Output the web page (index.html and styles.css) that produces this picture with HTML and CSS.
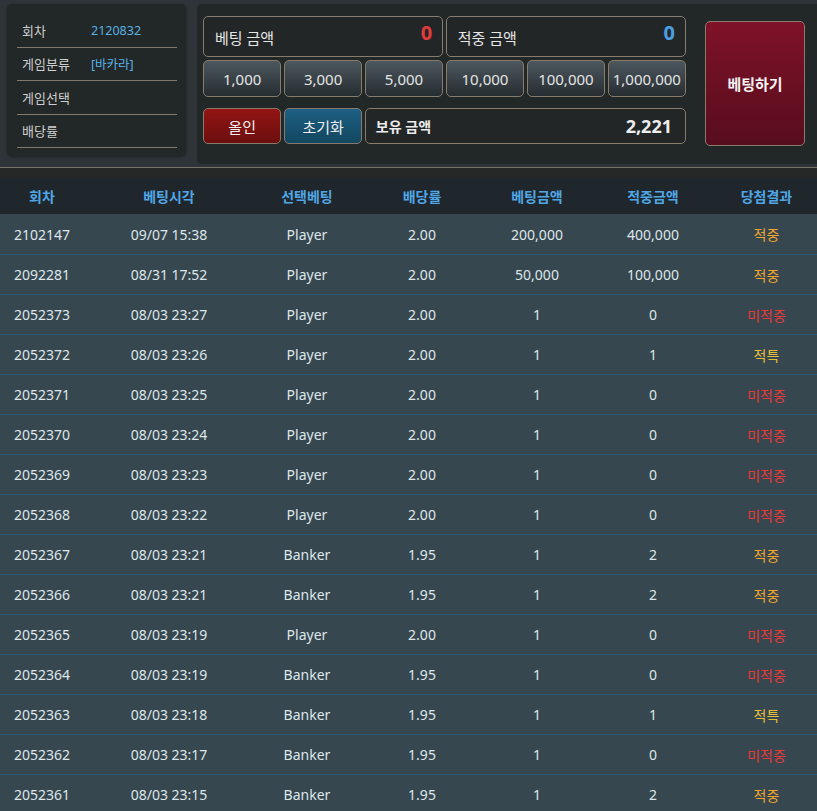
FILE: index.html
```html
<!DOCTYPE html>
<html lang="ko">
<head>
<meta charset="utf-8">
<title>베팅</title>
<link rel="stylesheet" href="styles.css">
</head>
<body>
<div class="top">
  <div class="info">
    <div class="info-row"><span class="info-label">회차</span><span class="info-value">2120832</span></div>
    <div class="info-row"><span class="info-label">게임분류</span><span class="info-value">[바카라]</span></div>
    <div class="info-row"><span class="info-label">게임선택</span><span class="info-value"></span></div>
    <div class="info-row"><span class="info-label">배당률</span><span class="info-value"></span></div>
  </div>
  <div class="bet">
    <div class="bet-main">
      <div class="amount">
        <span class="amount-label">베팅 금액</span>
        <span class="amount-value red">0</span>
      </div>
      <div class="amount">
        <span class="amount-label">적중 금액</span>
        <span class="amount-value blue">0</span>
      </div>
      <div class="chips">
        <button class="chip">1,000</button>
        <button class="chip">3,000</button>
        <button class="chip">5,000</button>
        <button class="chip">10,000</button>
        <button class="chip">100,000</button>
        <button class="chip">1,000,000</button>
      </div>
      <div class="actions">
        <button class="act allin">올인</button>
        <button class="act reset">초기화</button>
        <div class="balance">
          <span class="balance-label">보유 금액</span>
          <span class="balance-value">2,221</span>
        </div>
      </div>
    </div>
    <button class="bet-go">베팅하기</button>
  </div>
</div>
<div class="list">
  <table class="history">
    <colgroup>
      <col class="c1"><col class="c2"><col class="c3"><col class="c4"><col class="c5"><col class="c6"><col class="c7">
    </colgroup>
    <thead>
      <tr><th>회차</th><th>베팅시각</th><th>선택베팅</th><th>배당률</th><th>베팅금액</th><th>적중금액</th><th>당첨결과</th></tr>
    </thead>
    <tbody>
      <tr><td>2102147</td><td>09/07 15:38</td><td>Player</td><td>2.00</td><td>200,000</td><td>400,000</td><td class="win">적중</td></tr>
      <tr><td>2092281</td><td>08/31 17:52</td><td>Player</td><td>2.00</td><td>50,000</td><td>100,000</td><td class="win">적중</td></tr>
      <tr><td>2052373</td><td>08/03 23:27</td><td>Player</td><td>2.00</td><td>1</td><td>0</td><td class="lose">미적중</td></tr>
      <tr><td>2052372</td><td>08/03 23:26</td><td>Player</td><td>2.00</td><td>1</td><td>1</td><td class="tie">적특</td></tr>
      <tr><td>2052371</td><td>08/03 23:25</td><td>Player</td><td>2.00</td><td>1</td><td>0</td><td class="lose">미적중</td></tr>
      <tr><td>2052370</td><td>08/03 23:24</td><td>Player</td><td>2.00</td><td>1</td><td>0</td><td class="lose">미적중</td></tr>
      <tr><td>2052369</td><td>08/03 23:23</td><td>Player</td><td>2.00</td><td>1</td><td>0</td><td class="lose">미적중</td></tr>
      <tr><td>2052368</td><td>08/03 23:22</td><td>Player</td><td>2.00</td><td>1</td><td>0</td><td class="lose">미적중</td></tr>
      <tr><td>2052367</td><td>08/03 23:21</td><td>Banker</td><td>1.95</td><td>1</td><td>2</td><td class="win">적중</td></tr>
      <tr><td>2052366</td><td>08/03 23:21</td><td>Banker</td><td>1.95</td><td>1</td><td>2</td><td class="win">적중</td></tr>
      <tr><td>2052365</td><td>08/03 23:19</td><td>Player</td><td>2.00</td><td>1</td><td>0</td><td class="lose">미적중</td></tr>
      <tr><td>2052364</td><td>08/03 23:19</td><td>Banker</td><td>1.95</td><td>1</td><td>0</td><td class="lose">미적중</td></tr>
      <tr><td>2052363</td><td>08/03 23:18</td><td>Banker</td><td>1.95</td><td>1</td><td>1</td><td class="tie">적특</td></tr>
      <tr><td>2052362</td><td>08/03 23:17</td><td>Banker</td><td>1.95</td><td>1</td><td>0</td><td class="lose">미적중</td></tr>
      <tr><td>2052361</td><td>08/03 23:15</td><td>Banker</td><td>1.95</td><td>1</td><td>2</td><td class="win">적중</td></tr>
    </tbody>
  </table>
</div>
</body>
</html>
```
FILE: styles.css
```css
* { box-sizing: border-box; }
html, body { margin: 0; padding: 0; }
body {
  background: #2e3437;
  font-family: "Noto Sans", "Noto Sans CJK KR", sans-serif;
  color: #dde4e8;
  overflow: hidden;
}
button { font-family: inherit; cursor: pointer; }

.top {
  display: flex;
  align-items: flex-start;
  gap: 11px;
  padding: 4px 0 3px 7px;
  border-bottom: 1px solid #78736b;
}

.info {
  width: 179px;
  height: 152px;
  background: #222728;
  border-radius: 5px;
  padding: 10px 9px 0 10px;
  box-shadow: 0 1px 3px rgba(0,0,0,0.35);
}
.info-row {
  display: flex;
  align-items: center;
  height: 33.5px;
  padding-left: 5px;
  border-bottom: 1px solid #7f796f;
  font-size: 13px;
}
.info-label { width: 69px; color: #cfcfcf; }
.info-value { color: #5ab2e4; font-size: 12.5px; }

.bet {
  flex: 1;
  display: flex;
  align-items: flex-start;
  height: 160px;
  background: #222728;
  border-radius: 5px 0 0 5px;
  padding: 12px 0 0 6px;
}
.bet-main {
  width: 483px;
  display: grid;
  grid-template-columns: repeat(6, 1fr);
  column-gap: 2.6px;
}
.amount {
  grid-column: span 3;
  height: 41px;
  border: 1px solid #877c6e;
  border-radius: 5px;
  background: #232627;
  display: flex;
  justify-content: space-between;
  align-items: flex-start;
  padding: 0 10px 0 11px;
}
.amount-label { font-size: 15px; line-height: 20px; margin-top: 11px; color: #e6e6e6; }
.amount-value { font-size: 20px; line-height: 24px; font-weight: 700; margin-top: 4px; }
.red { color: #e23b3b; }
.blue { color: #4a9fe0; }

.chips {
  grid-column: 1 / -1;
  display: grid;
  grid-template-columns: repeat(6, 1fr);
  gap: 2.6px;
  margin-top: 3px;
}
.chip {
  height: 37px;
  border: 1px solid #887b6b;
  border-radius: 5px;
  background: linear-gradient(#4c575e, #262d31);
  color: #e4e4e4;
  font-size: 15px;
  padding: 0;
}

.actions {
  grid-column: 1 / -1;
  display: grid;
  grid-template-columns: repeat(6, 1fr);
  gap: 2.6px;
  margin-top: 11px;
}
.act {
  height: 36px;
  border: 1px solid #887b6b;
  border-radius: 5px;
  color: #eeeeee;
  font-size: 15px;
  padding: 0;
}
.allin { background: linear-gradient(#931414, #6c0f0f); }
.reset { background: linear-gradient(#1d5f83, #124760); }
.balance {
  grid-column: span 4;
  height: 36px;
  border: 1px solid #887b6b;
  border-radius: 5px;
  background: #232627;
  display: flex;
  justify-content: space-between;
  align-items: center;
  padding: 0 13px 0 10px;
}
.balance-label { font-size: 14px; font-weight: 700; color: #ececec; }
.balance-value { font-size: 18px; font-weight: 700; color: #eeeeee; }

.bet-go {
  margin: 5px 0 0 19px;
  width: 100px;
  height: 125px;
  border: 1px solid #8a7c6c;
  border-radius: 5px;
  background: linear-gradient(#7f1229, #570d1d);
  color: #f4f4f4;
  font-size: 15px;
  font-weight: 700;
  padding: 0;
}

.list {
  background: #262828;
  padding-top: 10px;
}
.history {
  width: 100%;
  border-collapse: collapse;
  table-layout: fixed;
}
.c1 { width: 84px; }
.c2 { width: 170px; }
.c3 { width: 106px; }
.c4 { width: 124px; }
.c5 { width: 106px; }
.c6 { width: 126px; }
.history th {
  height: 36px;
  background: #1f262c;
  color: #50a6e4;
  font-size: 14px;
  font-weight: 700;
  text-align: center;
  padding: 0 0 1px;
}
.history td {
  height: 40px;
  background: #37474f;
  border-bottom: 1px solid #2c5876;
  font-size: 14px;
  text-align: center;
  padding: 1px 0 0;
  color: #dde6ea;
}
.history td.win { color: #f2a62e; }
.history td.lose { color: #e63a3a; }
.history td.tie { color: #e6be3c; }
```
